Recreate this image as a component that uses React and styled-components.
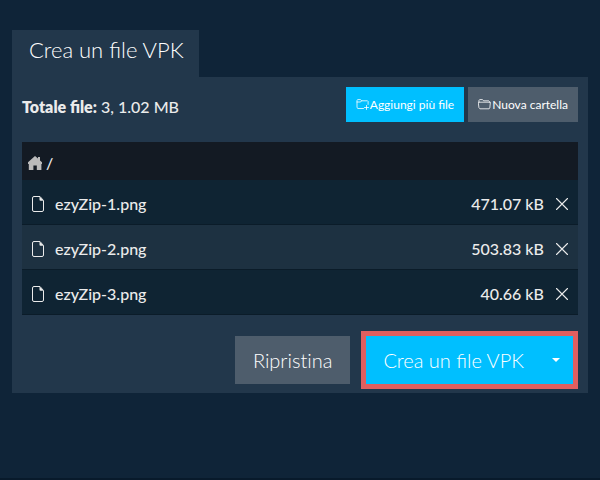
import React,{useState} from 'react'
import styled,{createGlobalStyle} from 'styled-components'

const startfiles=[
  {name:"ezyZip-1.png",size:471.07},
  {name:"ezyZip-2.png",size:503.83},
  {name:"ezyZip-3.png",size:40.66},
];

const App = () => {
  const[files,setfiles]=useState(startfiles);

// remove one file from the list

  const removehandle=(i)=>{
    let copyvalue=[...files];
    copyvalue.splice(i,1);
    setfiles(copyvalue);
  }

  const total=files.reduce((sum,f)=>sum+f.size,0);

  return (
    <>
    <Global/>
    <Page>
      <Tab>Crea un file VPK</Tab>
      <Panel>
        <Toolbar>
          <Total><b>Totale file:</b> {files.length}, {(total/1000).toFixed(2)} MB</Total>
          <SmallButton $primary><FolderIcon plus/>Aggiungi più file</SmallButton>
          <SmallButton><FolderIcon/>Nuova cartella</SmallButton>
        </Toolbar>

        <FileTable>
          <thead>
            <tr>
              <PathCell colSpan={4}>
                <Crumb><a href="#root" aria-label="Home"><HomeIcon/></a>/</Crumb>
              </PathCell>
            </tr>
          </thead>
          <tbody>
            {files.map((f,i)=>(
              <FileRow key={f.name}>
                <td className='icon'><FileIcon/></td>
                <td>{f.name}</td>
                <td className='size'>{f.size.toFixed(2)} kB</td>
                <td className='remove'>
                  <RemoveButton aria-label={"Rimuovi "+f.name} onClick={()=>{removehandle(i)}}><CloseIcon/></RemoveButton>
                </td>
              </FileRow>
            ))}
          </tbody>
        </FileTable>

        <Footer>
          <ResetButton onClick={()=>{setfiles(startfiles)}}>Ripristina</ResetButton>
          <Split>
            <BigButton $primary>Crea un file VPK</BigButton>
            <ArrowButton aria-label="Altre opzioni">
              <svg width="8" height="4" viewBox="0 0 8 4"><path d="M0 0h8L4 4z" fill="currentColor"/></svg>
            </ArrowButton>
          </Split>
        </Footer>
      </Panel>
    </Page>
    </>
  )
}

export default App

// icons

const FolderIcon=({plus})=>(
  <svg width="13" height="12" viewBox="0 0 13 12" fill="none" stroke="currentColor" strokeWidth="0.8" strokeLinejoin="round" strokeLinecap="round">
    {plus
      ? <><path d="M7.5 9.5H2L1 8.700V1.600L1.600.600h2.900l1.100 1.200h5.900l.600.600v3"/><path d="M1 3h3.600l1-1.200M10.500 6.500v4M8.500 8.500h4"/></>
      : <><path d="M1 3.200V1.200L1.600.600h2.900l1.100 1.200h5.200l.600.600v.800"/><path d="M.600 3.200h11.800l-.600 5.800-.700.800H1.900l-.700-.800z"/></>}
  </svg>
)

const HomeIcon=()=>(
  <svg width="14" height="14" viewBox="0 0 14 14" fill="currentColor">
    <path d="M7 0l3 2.6V1h2v3.4l2 1.9V8h-.6v6H8.8V9.6H5.4V14H.8V8H0V6.3z"/>
  </svg>
)

const FileIcon=()=>(
  <svg width="12" height="16" viewBox="0 0 12 16">
    <path d="M2 .5h6l3.500 4v9.500q0 1.500-1.500 1.500H2Q.5 15.500.5 14V2Q.5.5 2 .5z" fill="none" stroke="currentColor" strokeWidth="1"/>
    <path d="M7.500.6v3.200q0 1 1 1h3z" fill="currentColor"/>
  </svg>
)

const CloseIcon=()=>(
  <svg width="12" height="12" viewBox="0 0 12 12" fill="none" stroke="currentColor" strokeWidth="1.1" strokeLinecap="round">
    <path d="M.5.5l11 11M11.5.5l-11 11"/>
  </svg>
)

const Global=createGlobalStyle`
*{
  box-sizing:border-box;
}
body{
  margin:0;
  background-color:#0f2438;
  color:#ebebeb;
  font-family:Lato,"Liberation Sans",sans-serif;
  font-size:16px;
  font-weight:500;
}
button{
  border:0;
  font-family:inherit;
  color:inherit;
  cursor:pointer;
}
svg{
  display:block;
  flex:none;
}
`;

const Page=styled.main`
min-height:100vh;
padding:30px 12px;
border-bottom:2px solid #081a2b;
`;

const Tab=styled.h1`
width:fit-content;
margin:0;
padding:0 15px 7px 17px;
background-color:#22374b;
color:#ffffff;
font-size:22px;
font-weight:300;
line-height:40px;
`;

const Panel=styled.section`
padding:10px 10px 4px;
background-color:#22374b;
`;

const Toolbar=styled.div`
display:flex;
align-items:center;
gap:4px;
margin-bottom:20px;
`;

const Total=styled.div`
flex:1;
line-height:20px;
padding-top:4px;
b{
  font-weight:800;
}
`;

const SmallButton=styled.button`
display:flex;
align-items:center;
gap:1px;
height:35px;
padding:0 10px;
background-color:${(p)=>p.$primary?"#00bfff":"#4e5d6c"};
color:#ffffff;
font-size:12px;
font-weight:400;
white-space:nowrap;
`;

const FileTable=styled.table`
width:100%;
border-collapse:collapse;
`;

const PathCell=styled.th`
height:38px;
padding:3px 6px 0;
background-color:#131a23;
font-weight:500;
text-align:left;
`;

const Crumb=styled.div`
display:flex;
align-items:center;
gap:4px;
a{
  color:#bababa;
}
`;

const FileRow=styled.tr`
height:45px;
background-color:#0f2433;
box-shadow:inset 0 -1px #0b1c29;
&:nth-child(even){
  background-color:#1d3141;
}
td{
  padding:2px 0 0;
}
.icon{
  width:33px;
  padding-left:10px;
}
.size{
  text-align:right;
}
.remove{
  width:34px;
  padding-left:12px;
}
`;

const RemoveButton=styled.button`
display:block;
padding:0;
background:none;
`;

const Footer=styled.div`
display:flex;
align-items:center;
justify-content:flex-end;
gap:11px;
margin-top:16px;
`;

const Split=styled.div`
display:flex;
border:5px solid #e05f5f;
`;

const BigButton=styled.button`
height:48px;
padding:0 15px 0 17px;
background-color:${(p)=>p.$primary?"#00bfff":"#4e5d6c"};
color:#ffffff;
font-size:20px;
font-weight:300;
white-space:nowrap;
`;

const ResetButton=styled(BigButton)`
padding:0 18px;
font-variant-ligatures:none;
`;

const ArrowButton=styled.button`
display:flex;
align-items:center;
justify-content:center;
width:34px;
padding:0;
background-color:#00bfff;
color:#ffffff;
`;
